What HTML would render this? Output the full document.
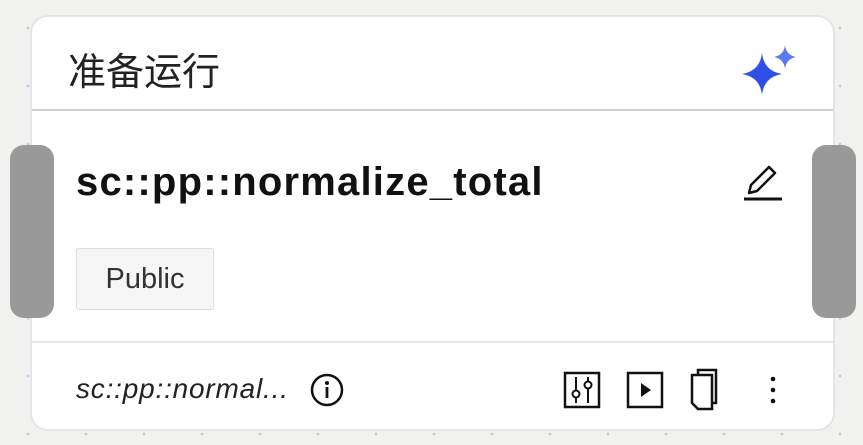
<!DOCTYPE html><html><head><style>
body{margin:0;width:863px;height:445px;background:#f1f1f0;position:relative;overflow:hidden;font-family:"Liberation Sans","Noto Sans CJK SC",sans-serif;
background-image:radial-gradient(circle,#c8c8cc 1.2px,transparent 1.5px);background-size:58px 58px;background-position:-1px -1px}
.card{position:absolute;left:30px;top:15px;width:805px;height:416px;background:#fff;border:2px solid #e4e4ea;border-radius:18px;box-sizing:border-box}
.hdr{position:absolute;left:0;right:0;top:0;height:92px;border-bottom:2px solid #cfcfcf}
.h{position:absolute;left:36px;top:24px;font-size:38px;color:#222}
.t{position:absolute;left:44px;top:143px;font-size:40px;font-weight:bold;color:#111;letter-spacing:1.2px}
.pub{position:absolute;left:44px;top:231px;width:138px;height:62px;border:1px solid #ddd;background:#f6f6f6;box-sizing:border-box;border-radius:3px;font-size:29px;color:#333;line-height:60px;text-align:center}
.ft{position:absolute;left:0;right:0;top:324px;border-top:2px solid #e6e6e6}
.f{position:absolute;left:44px;top:356px;font-size:28px;font-style:italic;color:#222;letter-spacing:0.8px}
.hd{position:absolute;width:44px;height:173px;top:145px;background:#999;border-radius:14px}
</style></head><body>
<div class="card">
<div class="hdr"><div class="h">准备运行</div>
<svg style="position:absolute;left:700px;top:20px" width="80" height="64" viewBox="0 0 80 64"><path d="M30 16 Q32 34 50 37 Q32 40 30 58 Q28 40 10 37 Q28 34 30 16Z" fill="#2f4fe8"/><path d="M53 8 Q54 18 64 20 Q54 22 53 32 Q52 22 42 20 Q52 18 53 8Z" fill="#5a78f0"/></svg></div>
<div class="t">sc::pp::normalize_total</div>
<svg style="position:absolute;left:710px;top:144px" width="44" height="42" viewBox="0 0 44 42"><path d="M7 32 L9 24 L27 6 L33 12 L15 30 Z" fill="none" stroke="#111" stroke-width="2.5" stroke-linejoin="round"/><line x1="2" y1="38" x2="40" y2="38" stroke="#111" stroke-width="3"/></svg>
<div class="pub">Public</div>
<div class="ft"></div>
<div class="f">sc::pp::normal...</div>
<svg style="position:absolute;left:277px;top:355px" width="36" height="36" viewBox="0 0 36 36"><circle cx="18" cy="18" r="15" fill="none" stroke="#111" stroke-width="2.5"/><circle cx="18" cy="11" r="2" fill="#111"/><line x1="18" y1="15" x2="18" y2="26" stroke="#111" stroke-width="2.8"/></svg>
<svg style="position:absolute;left:530px;top:350px" width="230" height="45" viewBox="0 0 230 45">
<rect x="3" y="6" width="34" height="34" fill="none" stroke="#111" stroke-width="2.5"/><line x1="14" y1="10" x2="14" y2="36" stroke="#111" stroke-width="2"/><line x1="26" y1="10" x2="26" y2="36" stroke="#111" stroke-width="2"/><circle cx="14" cy="27" r="3.5" fill="#fff" stroke="#111" stroke-width="2"/><circle cx="26" cy="18" r="3.5" fill="#fff" stroke="#111" stroke-width="2"/>
<rect x="66" y="6" width="34" height="34" fill="none" stroke="#111" stroke-width="2.5"/><path d="M79 16 L89 23 L79 30Z" fill="#111"/>
<path d="M136 8 L136 3 L154 3 L154 36 L150 36" fill="none" stroke="#111" stroke-width="2.5"/><path d="M130 8 L150 8 L150 42 L136 42 L130 36 Z" fill="none" stroke="#111" stroke-width="2.5"/>
<circle cx="211" cy="12" r="2.3" fill="#111"/><circle cx="211" cy="23" r="2.3" fill="#111"/><circle cx="211" cy="34" r="2.3" fill="#111"/></svg>
</div>
<div class="hd" style="left:10px"></div><div class="hd" style="left:812px"></div>
</body></html>
